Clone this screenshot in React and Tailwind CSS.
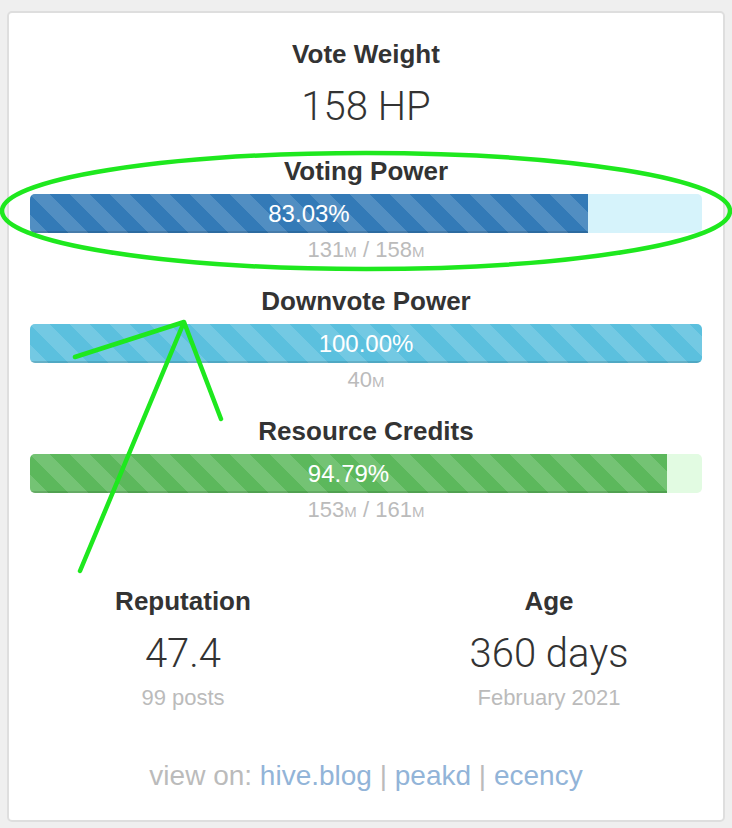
// Account stats card: vote weight, mana bars, reputation / age

const BARS = [
  { title: 'Voting Power', pct: 83.03, fill: 'bg-[#337ab7]', track: 'bg-[#d6f3fb]', cur: '131', max: '158' },
  { title: 'Downvote Power', pct: 100, fill: 'bg-[#5bc0de]', track: 'bg-[#d6f3fb]', cur: '40' },
  { title: 'Resource Credits', pct: 94.79, fill: 'bg-[#5cb85c]', track: 'bg-[#e2fbe2]', cur: '153', max: '161' },
];

const STRIPES =
  'bg-[linear-gradient(45deg,rgba(255,255,255,.15)_25%,transparent_25%,transparent_50%,rgba(255,255,255,.15)_50%,rgba(255,255,255,.15)_75%,transparent_75%,transparent)] bg-size-[40px_40px]';

const Mega = ({ n }) => (
  <>
    {n}
    <span className="text-[15px] leading-[0] uppercase">M</span>
  </>
);

const ManaBar = ({ title, pct, fill, track, cur, max, first }) => (
  <div className={first ? 'mt-[27px]' : 'mt-[24px]'}>
    <h4 className="text-[26px] font-bold leading-[30px] text-[#333]">{title}</h4>
    <div className={`mt-[8px] h-[39px] rounded-[5px] overflow-hidden ${track}`}>
      <div
        className={`h-full text-white text-[24px] leading-[39px] shadow-[inset_0_-2px_0_rgba(0,0,0,0.12)] ${fill} ${STRIPES}`}
        style={{ width: `${pct}%` }}
      >
        {pct.toFixed(2)}%
      </div>
    </div>
    <p className="mt-[5px] h-[24px] text-[22px] leading-[24px] text-[#bbb]">
      <Mega n={cur} />
      {max && (
        <>
          {' / '}
          <Mega n={max} />
        </>
      )}
    </p>
  </div>
);

const Stat = ({ label, value, sub }) => (
  <div className="flex flex-col items-center">
    <h4 className="text-[26px] font-bold leading-[30px] text-[#333]">{label}</h4>
    <p className="mt-[16px] font-['Roboto',sans-serif] font-light text-[40px] leading-[44px] text-[#333]">{value}</p>
    <p className="mt-[10px] text-[22px] leading-[24px] text-[#bbb]">{sub}</p>
  </div>
);

const Annotations = () => (
  <svg className="absolute inset-0 pointer-events-none" width="732" height="828" viewBox="0 0 732 828" fill="none">
    <g stroke="#1ee81e" strokeWidth="4.5" strokeLinecap="round">
      <ellipse cx="366" cy="211" rx="364" ry="58" />
      <path d="M75 357 L184 322 M184 322 L221 419 M184 322 L80 571" />
    </g>
  </svg>
);

export default function App() {
  return (
    <div className="relative min-h-screen bg-[#efefef] pt-[11px] px-[7px] pb-[6px] font-['Liberation_Sans',Arial,sans-serif]">
      <div className="bg-white border-2 border-[#dedede] rounded-[5px] px-[21px] pt-[26px] pb-[28px] text-center">
        <h4 className="text-[26px] font-bold leading-[30px] text-[#333]">Vote Weight</h4>
        <p className="mt-[16px] font-['Roboto',sans-serif] font-light text-[40px] leading-[44px] text-[#333]">158 HP</p>

        {BARS.map((b, i) => (
          <ManaBar key={b.title} {...b} first={i === 0} />
        ))}

        <div className="mt-[64px] -mx-[30px] grid grid-cols-2">
          <Stat label="Reputation" value="47.4" sub="99 posts" />
          <Stat label="Age" value="360 days" sub="February 2021" />
        </div>

        <p className="mt-[50px] text-[28px] leading-[32px] text-[#bbb]">
          view on: <a className="text-[#92b4d8]">hive.blog</a> | <a className="text-[#92b4d8]">peakd</a> |{' '}
          <a className="text-[#92b4d8]">ecency</a>
        </p>
      </div>
      <Annotations />
    </div>
  );
}
